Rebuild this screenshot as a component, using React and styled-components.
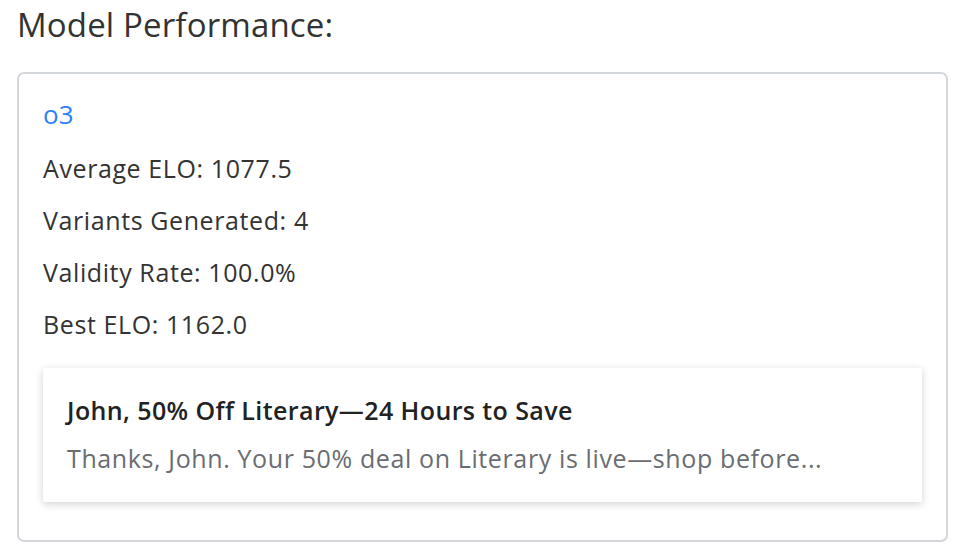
import styled, { createGlobalStyle } from 'styled-components';

const GlobalStyle = createGlobalStyle`
    body {
        margin: 0;
        background: #ffffff;
        font-family: "Open Sans", Lato, sans-serif;
        color: #333333;
    }
`
const Container = styled.div`
    padding: 6px 18px 12px 17px;
`
const Heading = styled.h2`
    margin: 0 0 28px;
    font-size: 33px;
    font-weight: 400;
    letter-spacing: 0.15px;
    line-height: 38px;
    color: #333333;
`
const Card = styled.div`
    border: 2px solid #d3d6da;
    border-radius: 7px;
    padding: 20px 24px 38px 24px;
    display: flex;
    flex-direction: column;
`
const ModelName = styled.div`
    font-size: 26px;
    line-height: 40px;
    color: #2f7ff6;
    margin-bottom: 8px;
`
const Stat = styled.div`
    font-size: 25px;
    letter-spacing: 0.6px;
    line-height: 52px;
    color: #333333;
`
const Preview = styled.div`
    margin-top: 18px;
    background: #ffffff;
    box-shadow: 0 2px 8px rgba(0, 0, 0, 0.18);
    padding: 25px 24px 27px;
    display: flex;
    flex-direction: column;
    gap: 14px;
`
const PreviewTitle = styled.div`
    font-size: 25px;
    font-weight: 600;
    letter-spacing: 0.4px;
    line-height: 34px;
    color: #222222;
`
const PreviewText = styled.div`
    font-size: 25px;
    letter-spacing: 0.62px;
    line-height: 34px;
    color: #696d72;
`

const stats = [
    ['Average ELO', '1077.5'],
    ['Variants Generated', '4'],
    ['Validity Rate', '100.0%'],
    ['Best ELO', '1162.0'],
]

const App = () => {
    return (
        <Container>
            <GlobalStyle />
            <Heading>Model Performance:</Heading>
            <Card>
                <ModelName>o3</ModelName>
                {stats.map(([label, value]) => (
                    <Stat key={label}>{label}: {value}</Stat>
                ))}
                <Preview>
                    <PreviewTitle>John, 50% Off Literary—24 Hours to Save</PreviewTitle>
                    <PreviewText>Thanks, John. Your 50% deal on Literary is live—shop before...</PreviewText>
                </Preview>
            </Card>
        </Container>
    )
}

export default App;
